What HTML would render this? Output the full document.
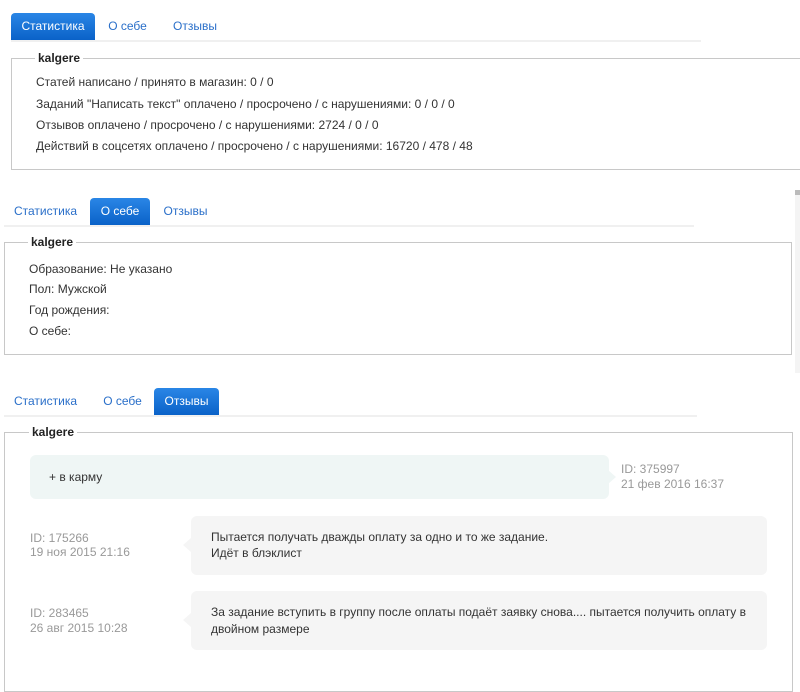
<!DOCTYPE html>
<html><head><meta charset="utf-8"><style>
*{margin:0;padding:0;box-sizing:border-box}
body{width:800px;height:666px;background:#fff;position:relative;overflow:hidden;font-family:"Liberation Sans",Arial,sans-serif;font-size:12px;color:#333}
.a{position:absolute;white-space:nowrap}
.tab{position:absolute;height:27px;line-height:27px;color:#2a6fc9;font-size:12px;text-align:center}
.act{background:linear-gradient(#2a86e6,#0a62c8);color:#fff;border-radius:4px 4px 0 0}
.hl{position:absolute;height:2px;background:#f0f0f0}
.fs{position:absolute;border:1px solid #c8c8c8}
.lg{position:absolute;background:#fff;padding:0 3px;font-weight:bold;color:#222;font-size:12px;line-height:14px}
.g{color:#999}
.b{position:absolute;border-radius:6px}
</style></head><body>
<div class="tab act" style="left:11px;top:13px;width:84px">Статистика</div>
<div class="tab" style="left:100px;top:13px;width:55px">О себе</div>
<div class="tab" style="left:165px;top:13px;width:60px">Отзывы</div>
<div class="hl" style="left:11px;top:40px;width:690px"></div>
<div class="fs" style="left:11px;top:58px;width:800px;height:112px"></div>
<div class="lg" style="left:35px;top:51px">kalgere</div>
<div class="a" style="left:36px;top:75px">Статей написано / принято в магазин: 0 / 0</div>
<div class="a" style="left:36px;top:97px">Заданий "Написать текст" оплачено / просрочено / с нарушениями: 0 / 0 / 0</div>
<div class="a" style="left:36px;top:118px">Отзывов оплачено / просрочено / с нарушениями: 2724 / 0 / 0</div>
<div class="a" style="left:36px;top:139px">Действий в соцсетях оплачено / просрочено / с нарушениями: 16720 / 478 / 48</div>

<div class="tab" style="left:8px;top:198px;width:75px">Статистика</div>
<div class="tab act" style="left:90px;top:198px;width:60px">О себе</div>
<div class="tab" style="left:158px;top:198px;width:55px">Отзывы</div>
<div class="hl" style="left:4px;top:225px;width:690px"></div>
<div class="fs" style="left:4px;top:242px;width:788px;height:113px"></div>
<div class="lg" style="left:28px;top:235px">kalgere</div>
<div class="a" style="left:29px;top:262px">Образование: Не указано</div>
<div class="a" style="left:29px;top:282px">Пол: Мужской</div>
<div class="a" style="left:29px;top:303px">Год рождения:</div>
<div class="a" style="left:29px;top:324px">О себе:</div>
<div style="position:absolute;left:795px;top:190px;width:5px;height:183px;background:#f4f4f4"></div>
<div style="position:absolute;left:795px;top:190px;width:5px;height:5px;background:#bbb"></div>

<div class="tab" style="left:8px;top:388px;width:75px">Статистика</div>
<div class="tab" style="left:95px;top:388px;width:55px">О себе</div>
<div class="tab act" style="left:154px;top:388px;width:65px">Отзывы</div>
<div class="hl" style="left:4px;top:415px;width:693px"></div>
<div class="fs" style="left:4px;top:432px;width:789px;height:260px"></div>
<div class="lg" style="left:29px;top:425px">kalgere</div>

<div class="b" style="left:30px;top:455px;width:579px;height:44px;background:#eff6f5"></div>
<div class="a" style="left:608px;top:470px;width:0;height:0;border-top:7px solid transparent;border-bottom:7px solid transparent;border-left:8px solid #eff6f5"></div>
<div class="a" style="left:49px;top:470px">+ в карму</div>
<div class="a g" style="left:621px;top:462px">ID: 375997</div>
<div class="a g" style="left:621px;top:477px">21 фев 2016 16:37</div>

<div class="b" style="left:191px;top:516px;width:576px;height:59px;background:#f5f5f5"></div>
<div class="a" style="left:183px;top:538px;width:0;height:0;border-top:7px solid transparent;border-bottom:7px solid transparent;border-right:8px solid #f5f5f5"></div>
<div class="a" style="left:211px;top:530px">Пытается получать дважды оплату за одно и то же задание.</div>
<div class="a" style="left:211px;top:546px">Идёт в блэклист</div>
<div class="a g" style="left:30px;top:531px">ID: 175266</div>
<div class="a g" style="left:30px;top:545px">19 ноя 2015 21:16</div>

<div class="b" style="left:191px;top:591px;width:576px;height:59px;background:#f5f5f5"></div>
<div class="a" style="left:183px;top:613px;width:0;height:0;border-top:7px solid transparent;border-bottom:7px solid transparent;border-right:8px solid #f5f5f5"></div>
<div class="a" style="left:211px;top:605px">За задание вступить в группу после оплаты подаёт заявку снова.... пытается получить оплату в</div>
<div class="a" style="left:211px;top:622px">двойном размере</div>
<div class="a g" style="left:30px;top:606px">ID: 283465</div>
<div class="a g" style="left:30px;top:621px">26 авг 2015 10:28</div>
</body></html>
